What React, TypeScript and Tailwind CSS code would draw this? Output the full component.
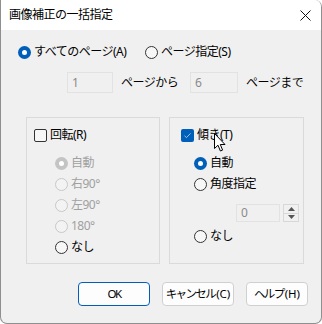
import { ReactNode } from 'react';

const FONT = "font-['Noto_Sans','Noto_Sans_CJK_JP',sans-serif] tracking-[-0.5px]";

interface RadioProps {
  checked?: boolean;
  disabled?: boolean;
  children: ReactNode;
}

function Radio({ checked, disabled, children }: RadioProps) {
  let circle = 'border border-[#333333] bg-[#f7f7f7]';
  if (checked && !disabled) circle = 'bg-[#005fb8]';
  if (checked && disabled) circle = 'bg-[#c4c4c4]';
  if (!checked && disabled) circle = 'border border-[#c8c8c8] bg-[#f3f3f3]';

  return (
    <div className="flex items-center h-[16px]">
      <span className={`w-[13px] h-[13px] rounded-full flex items-center justify-center shrink-0 ${circle}`}>
        {checked && <span className="w-[5px] h-[5px] rounded-full bg-white" />}
      </span>
      <span className={`ml-[3px] text-[12px] leading-none whitespace-nowrap ${disabled ? 'text-[#a0a0a0]' : 'text-black'}`}>
        {children}
      </span>
    </div>
  );
}

function Checkbox({ checked, children }: { checked?: boolean; children: ReactNode }) {
  return (
    <div className="flex items-center h-[16px]">
      {checked ? (
        <span className="w-[13px] h-[13px] rounded-[2px] bg-[#005fb8] flex items-center justify-center">
          <svg width="9" height="9" viewBox="0 0 9 9">
            <path d="M1.5 4.8 L3.5 6.6 L7.5 2.4" fill="none" stroke="#9cc3ea" strokeWidth="1" />
          </svg>
        </span>
      ) : (
        <span className="w-[13px] h-[13px] rounded-[2px] border border-[#333333] bg-[#f7f7f7]" />
      )}
      <span className="ml-[3px] text-[12px] leading-none text-black whitespace-nowrap">{children}</span>
    </div>
  );
}

interface ButtonProps {
  label: string;
  mnemonic?: string;
  primary?: boolean;
  width: string;
}

function Button({ label, mnemonic, primary, width }: ButtonProps) {
  return (
    <div
      className={`${width} h-[24px] rounded-[4px] bg-[#fdfdfd] flex items-center justify-center whitespace-nowrap text-black ${
        primary ? 'border border-[#005fb8]' : 'border border-[#d0d0d0]'
      }`}
    >
      <span className="text-[11.5px] tracking-[-1.6px]">{label}</span>
      {mnemonic && <span className="text-[11.5px] tracking-[0px] ml-[1px]">{mnemonic}</span>}
    </div>
  );
}

export default function App() {
  return (
    <div className={`w-[322px] h-[324px] bg-white ${FONT}`}>
      <div className="w-[322px] h-[324px] flex flex-col border-l border-r border-b border-[#8f8f8f] rounded-tr-[7px] rounded-b-[7px] overflow-hidden bg-[#f0f0f0]">
        {/* title bar */}
        <div className="h-[30px] bg-white flex items-center justify-between pl-[8px] pr-[10px]">
          <span className="text-[12px] text-black leading-none">画像補正の一括指定</span>
          <svg width="11" height="11" viewBox="0 0 11 11">
            <path d="M0.5 0.5 L10.5 10.5 M10.5 0.5 L0.5 10.5" stroke="#111" strokeWidth="1" />
          </svg>
        </div>

        {/* page range */}
        <div className="flex items-center pt-[14px] pl-[17px]">
          <div className="w-[127px]">
            <Radio checked>すべてのページ(A)</Radio>
          </div>
          <Radio>ページ指定(S)</Radio>
        </div>

        <div className="flex items-center mt-[12px] pl-[66px]">
          <div className="w-[46px] h-[21px] border border-[#e2e2e2] bg-[#f0f0f0] text-[12px] text-[#8a8a8a] pl-[4px] flex items-center">1</div>
          <span className="ml-[8px] w-[69px] text-[12px] text-black">ページから</span>
          <div className="w-[48px] h-[21px] border border-[#e2e2e2] bg-[#f0f0f0] text-[12px] text-[#8a8a8a] pl-[4px] flex items-center">6</div>
          <span className="ml-[8px] text-[12px] text-black">ページまで</span>
        </div>

        {/* group boxes */}
        <div className="flex mt-[24px] pl-[25px] gap-[9px]">
          <div className="w-[134px] h-[147px] border border-[#dadada] pt-[9px] pl-[7px] flex flex-col">
            <Checkbox>回転(R)</Checkbox>
            <div className="pl-[21px] mt-[12px] flex flex-col gap-[5px]">
              <Radio checked disabled>自動</Radio>
              <Radio disabled>右90°</Radio>
              <Radio disabled>左90°</Radio>
              <Radio disabled>180°</Radio>
              <Radio>なし</Radio>
            </div>
          </div>

          <div className="relative w-[135px] h-[147px] border border-[#dadada] pt-[9px] pl-[11px] flex flex-col">
            <Checkbox checked>傾き(T)</Checkbox>
            <div className="pl-[13px] mt-[12px] flex flex-col gap-[5px]">
              <Radio checked>自動</Radio>
              <Radio>角度指定</Radio>
            </div>
            <div className="flex items-center mt-[12px] pl-[55px] gap-[3px]">
              <div className="w-[44px] h-[18px] border border-[#e2e2e2] bg-[#f0f0f0] text-[12px] text-[#8a8a8a] pl-[4px] flex items-center">0</div>
              <div className="w-[16px] h-[18px] border border-[#d8d8d8] flex flex-col">
                <div className="flex-1 flex items-center justify-center border-b border-[#d8d8d8]">
                  <svg width="7" height="4" viewBox="0 0 7 4"><path d="M0 4 L3.5 0 L7 4 Z" fill="#555" /></svg>
                </div>
                <div className="flex-1 flex items-center justify-center">
                  <svg width="7" height="4" viewBox="0 0 7 4"><path d="M0 0 L3.5 4 L7 0 Z" fill="#555" /></svg>
                </div>
              </div>
            </div>
            <div className="pl-[13px] mt-[6px]">
              <Radio>なし</Radio>
            </div>

            {/* mouse cursor */}
            <svg className="absolute left-[44px] top-[15px]" width="13" height="20" viewBox="0 0 13 20">
              <path
                d="M0.5 0.5 L0.5 15.5 L4 12.2 L6.4 18 L8.6 17.1 L6.3 11.5 L11 11.5 Z"
                fill="white"
                stroke="black"
                strokeWidth="1"
                strokeLinejoin="round"
              />
            </svg>
          </div>
        </div>

        {/* buttons */}
        <div className="flex mt-[18px] pl-[77px] gap-[12px]">
          <Button primary width="w-[72px]" label="OK" />
          <Button width="w-[72px]" label="キャンセル" mnemonic="(C)" />
          <Button width="w-[62px]" label="ヘルプ" mnemonic="(H)" />
        </div>
      </div>
    </div>
  );
}
